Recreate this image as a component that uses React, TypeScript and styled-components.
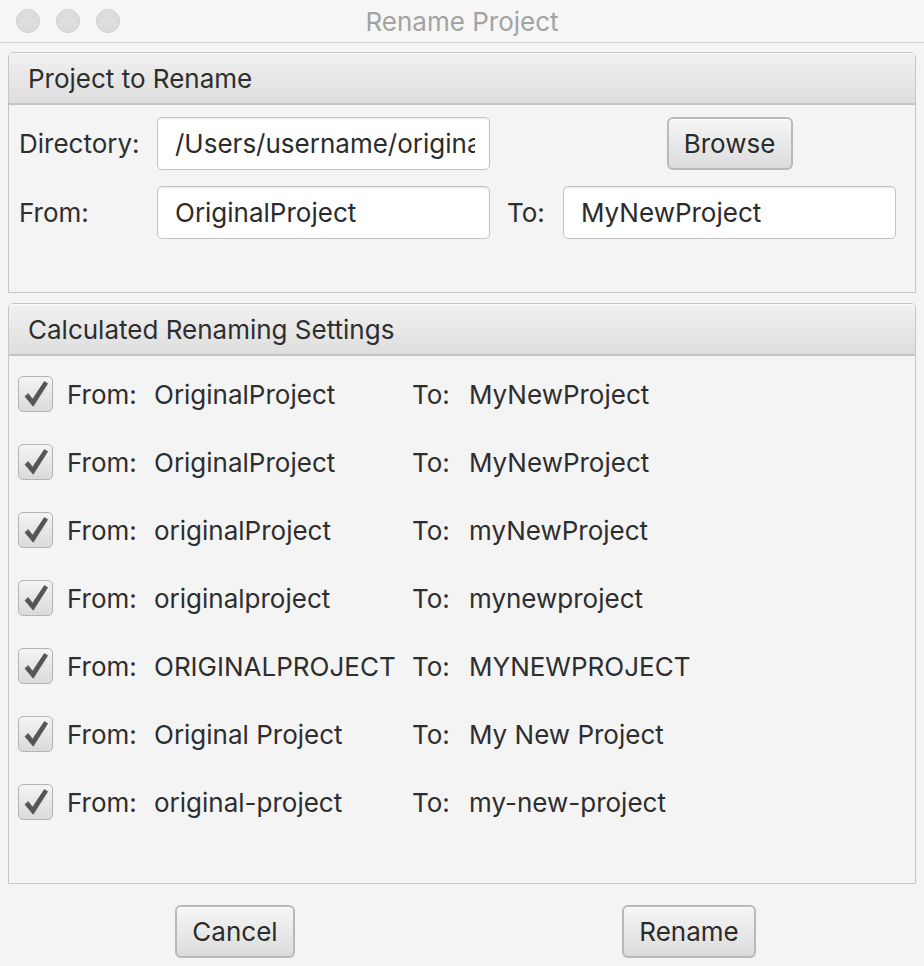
import React from "react";
import styled, { createGlobalStyle } from "styled-components";

const Global = createGlobalStyle`
  html, body { margin: 0; padding: 0; }
  body {
    background: #f4f4f4;
    font-family: Inter, "Helvetica Neue", "Liberation Sans", sans-serif;
    color: #2e2e2e;
  }
`;

const Window = styled.div`
  width: 924px;
  height: 966px;
  background: #f4f4f4;
  display: flex;
  flex-direction: column;
  overflow: hidden;
`;

const TitleBar = styled.div`
  height: 42px;
  display: grid;
  grid-template-columns: 1fr auto 1fr;
  align-items: center;
  background: #f6f6f6;
  border-bottom: 1px solid #d2d2d2;
  flex-shrink: 0;
`;

const Lights = styled.div`
  display: flex;
  gap: 16px;
  padding-left: 16px;
`;

const Light = styled.span`
  width: 22px;
  height: 22px;
  border-radius: 50%;
  background: #dddddd;
  border: 1px solid #d0d0d0;
`;

const Title = styled.div`
  font-size: 26px;
  color: #a3a3a3;
`;

const Content = styled.div`
  padding: 9px 8px 0 8px;
  display: flex;
  flex-direction: column;
  gap: 10px;
`;

const Panel = styled.section<{ $height: number }>`
  height: ${(p) => p.$height}px;
  box-sizing: border-box;
  border: 1px solid #c6c6c6;
  border-radius: 5px 5px 0 0;
  display: flex;
  flex-direction: column;
`;

const PanelHeader = styled.div`
  height: 52px;
  flex-shrink: 0;
  box-sizing: border-box;
  display: flex;
  align-items: center;
  padding-left: 19px;
  padding-top: 1px;
  font-size: 26px;
  color: #2e2e2e;
  background: linear-gradient(#f1f1f1, #dedede);
  border-bottom: 2px solid #c4c4c4;
  border-radius: 4px 4px 0 0;
  box-shadow: inset 0 1px 0 #fafafa;
`;

const FormGrid = styled.div`
  display: grid;
  grid-template-columns: 138px 333px 73px 333px;
  grid-auto-rows: 53px;
  row-gap: 16px;
  align-items: center;
  padding: 12px 0 0 10px;
`;

const Label = styled.span<{ $indent?: number }>`
  font-size: 26px;
  padding-left: ${(p) => p.$indent ?? 0}px;
`;

const Input = styled.input`
  height: 53px;
  width: 333px;
  box-sizing: border-box;
  background: #fff;
  border: 1.5px solid #c3c3c3;
  border-radius: 5px;
  box-shadow: inset 0 2px 2px -1px #e6e6e6;
  padding: 0 14px 0 17px;
  font-family: inherit;
  font-size: 26px;
  color: #2b2b2b;
  outline: none;
  margin: 0;
`;

const Button = styled.button<{ $width: number }>`
  width: ${(p) => p.$width}px;
  height: 53px;
  box-sizing: border-box;
  font-family: inherit;
  font-size: 26px;
  color: #2b2b2b;
  background: linear-gradient(#f6f6f6, #dcdcdc);
  border: 2px solid #b9b9b9;
  border-radius: 6px;
  box-shadow: inset 0 1px 0 #fdfdfd;
  padding: 0;
  justify-self: center;
`;

const List = styled.div`
  display: flex;
  flex-direction: column;
  gap: 32px;
  padding: 20px 0 0 9px;
`;

const Row = styled.div`
  display: grid;
  grid-template-columns: 35px 14px 87px 258px 57px auto;
  height: 36px;
  align-items: center;
  font-size: 26px;
`;

const CheckBox = styled.span`
  width: 35px;
  height: 36px;
  box-sizing: border-box;
  border: 1.5px solid #b4b4b4;
  border-radius: 5px;
  background: linear-gradient(#f4f4f4, #dadada);
  display: flex;
  align-items: center;
  justify-content: center;
`;

const Footer = styled.div`
  display: grid;
  grid-template-columns: 1fr 1fr;
  padding: 21px 8px 0 8px;
`;

const Check = () => (
  <CheckBox>
    <svg width="30" height="30" viewBox="0 0 30 30">
      <path
        d="M4 17.5 L7.2 14.6 L11.6 20.2 L23.4 2.6 L26.6 4.6 L12.2 27.2 Z"
        fill="#555555"
        stroke="#555555"
        strokeWidth="0.8"
        strokeLinejoin="round"
      />
    </svg>
  </CheckBox>
);

const rows: [string, string][] = [
  ["OriginalProject", "MyNewProject"],
  ["OriginalProject", "MyNewProject"],
  ["originalProject", "myNewProject"],
  ["originalproject", "mynewproject"],
  ["ORIGINALPROJECT", "MYNEWPROJECT"],
  ["Original Project", "My New Project"],
  ["original-project", "my-new-project"],
];

export default function App() {
  return (
    <>
      <Global />
      <Window>
        <TitleBar>
          <Lights>
            <Light />
            <Light />
            <Light />
          </Lights>
          <Title>Rename Project</Title>
          <span />
        </TitleBar>
        <Content>
          <Panel $height={241}>
            <PanelHeader>Project to Rename</PanelHeader>
            <FormGrid>
              <Label>Directory:</Label>
              <Input readOnly value="/Users/username/original-project" />
              <span />
              <Button $width={126}>Browse</Button>
              <Label>From:</Label>
              <Input readOnly value="OriginalProject" />
              <Label $indent={17}>To:</Label>
              <Input readOnly value="MyNewProject" />
            </FormGrid>
          </Panel>
          <Panel $height={581}>
            <PanelHeader>Calculated Renaming Settings</PanelHeader>
            <List>
              {rows.map(([from, to], i) => (
                <Row key={i}>
                  <Check />
                  <span />
                  <span>From:</span>
                  <span>{from}</span>
                  <span>To:</span>
                  <span>{to}</span>
                </Row>
              ))}
            </List>
          </Panel>
        </Content>
        <Footer>
          <Button $width={120}>Cancel</Button>
          <Button $width={134}>Rename</Button>
        </Footer>
      </Window>
    </>
  );
}
